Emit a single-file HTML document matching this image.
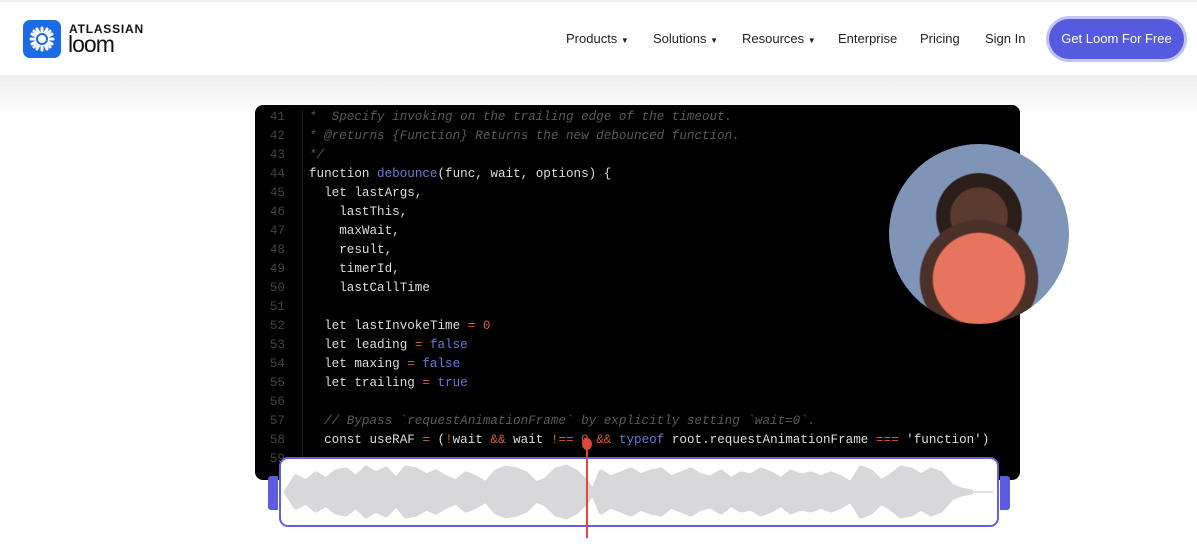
<!DOCTYPE html><html><head><style>
body{margin:0;width:1197px;height:547px;overflow:hidden;background:#fff;font-family:"Liberation Sans",sans-serif;position:relative}
.hdr{position:absolute;left:0;top:0;width:1197px;height:75px;background:#fff;border-top:2px solid #eee;box-sizing:border-box}
.band{position:absolute;left:0;top:75px;width:1197px;height:40px;background:linear-gradient(#eee,#fff)}
.nav{position:absolute;top:31px;font-size:13px;color:#222}
.btn{position:absolute;left:1049px;top:19px;width:135px;height:40px;border-radius:21px;background:#565ae0;box-shadow:0 0 0 3px #c3c4f4;color:#fff;font-size:13px;text-align:center;line-height:40px}
.code{position:absolute;left:255px;top:105px;width:765px;height:375px;background:#000;border-radius:8px;overflow:hidden;font-family:"Liberation Mono",monospace;font-size:12.6px}
.ln{position:absolute;left:0;width:30px;text-align:right;color:#444}
.l{position:absolute;left:54px;color:#ddd;white-space:pre}
.c{color:#5a5a5a;font-style:italic}.b{color:#6a78d8}.o{color:#d2603a}
.gut{position:absolute;left:47px;top:5px;width:1px;height:360px;background:#222}
</style></head><body>
<div class="hdr"></div><div class="band"></div>
<div style="position:absolute;left:23px;top:20px;width:38px;height:38px;border-radius:7px;background:#1d6ae5"></div>
<svg style="position:absolute;left:23px;top:20px" width="38" height="38" viewBox="0 0 38 38"><g stroke="#fff" stroke-width="3" stroke-linecap="round"><line x1="19" y1="8" x2="19" y2="30"/><line x1="8" y1="19" x2="30" y2="19"/><line x1="11" y1="11" x2="27" y2="27"/><line x1="27" y1="11" x2="11" y2="27"/><line x1="14" y1="9" x2="24" y2="29"/><line x1="24" y1="9" x2="14" y2="29"/><line x1="9" y1="14" x2="29" y2="24"/><line x1="29" y1="14" x2="9" y2="24"/></g><circle cx="19" cy="19" r="5" fill="#fff" stroke="#1d6ae5" stroke-width="2"/></svg>
<div style="position:absolute;left:69px;top:22px;font-size:12px;font-weight:bold;letter-spacing:.8px;color:#111">ATLASSIAN</div>
<div style="position:absolute;left:68px;top:31px;font-size:23px;color:#111;letter-spacing:-1px">loom</div>
<div class="nav" style="left:566px">Products <span style="font-size:8px">▼</span></div>
<div class="nav" style="left:653px">Solutions <span style="font-size:8px">▼</span></div>
<div class="nav" style="left:742px">Resources <span style="font-size:8px">▼</span></div>
<div class="nav" style="left:838px">Enterprise</div>
<div class="nav" style="left:920px">Pricing</div>
<div class="nav" style="left:985px">Sign In</div>
<div class="btn">Get Loom For Free</div>
<div class="code"><div class="gut"></div>
<div class="ln" style="top:5px">41</div><div class="l c" style="top:5px">*  Specify invoking on the trailing edge of the timeout.</div>
<div class="ln" style="top:24px">42</div><div class="l c" style="top:24px">* @returns {Function} Returns the new debounced function.</div>
<div class="ln" style="top:43px">43</div><div class="l c" style="top:43px">*/</div>
<div class="ln" style="top:62px">44</div><div class="l" style="top:62px;left:54px">function <span class="b">debounce</span>(func, wait, options) {</div>
<div class="ln" style="top:81px">45</div><div class="l" style="top:81px">  let lastArgs,</div>
<div class="ln" style="top:100px">46</div><div class="l" style="top:100px">    lastThis,</div>
<div class="ln" style="top:119px">47</div><div class="l" style="top:119px">    maxWait,</div>
<div class="ln" style="top:138px">48</div><div class="l" style="top:138px">    result,</div>
<div class="ln" style="top:157px">49</div><div class="l" style="top:157px">    timerId,</div>
<div class="ln" style="top:176px">50</div><div class="l" style="top:176px">    lastCallTime</div>
<div class="ln" style="top:195px">51</div>
<div class="ln" style="top:214px">52</div><div class="l" style="top:214px">  let lastInvokeTime <span class="o">= 0</span></div>
<div class="ln" style="top:233px">53</div><div class="l" style="top:233px">  let leading <span class="o">=</span> <span class="b">false</span></div>
<div class="ln" style="top:252px">54</div><div class="l" style="top:252px">  let maxing <span class="o">=</span> <span class="b">false</span></div>
<div class="ln" style="top:271px">55</div><div class="l" style="top:271px">  let trailing <span class="o">=</span> <span class="b">true</span></div>
<div class="ln" style="top:290px">56</div>
<div class="ln" style="top:309px">57</div><div class="l c" style="top:309px">  // Bypass `requestAnimationFrame` by explicitly setting `wait=0`.</div>
<div class="ln" style="top:328px">58</div><div class="l" style="top:328px">  const useRAF <span class="o">=</span> (<span class="o">!</span>wait <span class="o">&amp;&amp;</span> wait <span class="o">!== 0 &amp;&amp;</span> <span class="b">typeof</span> root.requestAnimationFrame <span class="o">===</span> 'function')</div>
<div class="ln" style="top:347px">59</div>
</div>
<div style="position:absolute;left:889px;top:144px;width:180px;height:180px;border-radius:50%;background:radial-gradient(circle at 50% 75%,#e8735f 0 28%,#4a3028 29% 36%,transparent 37%),radial-gradient(circle at 50% 40%,#5a3a2c 0 20%,#2b1d18 21% 30%,transparent 31%),#7e95b8"></div>
<div style="position:absolute;left:268px;top:476px;width:10px;height:34px;background:#5c5ce0;border-radius:3px 0 0 3px"></div>
<div style="position:absolute;left:1000px;top:476px;width:10px;height:34px;background:#5c5ce0;border-radius:0 3px 3px 0"></div>
<div style="position:absolute;left:279px;top:457px;width:716px;height:66px;border:2px solid #6560e0;border-radius:9px;background:#fff"></div>
<svg style="position:absolute;left:281px;top:459px" width="716" height="66" viewBox="0 0 716 66"><line x1="5" y1="33" x2="712" y2="33" stroke="#e4e4e6" stroke-width="2"/><path fill="#d8d8da" stroke="#d8d8da" stroke-width="5" stroke-linejoin="round" d="M5 33 L15 18 L25 23 L35 15 L45 21 L55 13 L65 11 L75 19 L85 9 L95 15 L105 10 L115 21 L125 9 L135 11 L145 17 L155 13 L165 19 L175 23 L185 15 L195 19 L205 25 L215 13 L225 9 L235 11 L245 15 L255 25 L265 21 L275 11 L285 8 L295 13 L305 23 L312 33 L320 13 L330 19 L340 15 L350 11 L360 17 L370 13 L380 11 L390 19 L400 15 L410 11 L420 17 L430 19 L440 13 L450 21 L460 15 L470 17 L480 11 L490 15 L500 21 L510 13 L520 17 L530 15 L540 19 L550 15 L560 19 L570 25 L580 9 L590 13 L600 23 L610 17 L620 9 L630 11 L640 17 L650 11 L660 15 L670 27 L680 31 L690 33 L680 35 L670 39 L660 51 L650 55 L640 49 L630 55 L620 57 L610 49 L600 43 L590 53 L580 57 L570 41 L560 47 L550 51 L540 47 L530 51 L520 49 L510 53 L500 45 L490 51 L480 55 L470 49 L460 51 L450 45 L440 53 L430 47 L420 49 L410 55 L400 51 L390 47 L380 55 L370 53 L360 49 L350 55 L340 51 L330 47 L320 53 L312 33 L305 43 L295 53 L285 58 L275 55 L265 45 L255 41 L245 51 L235 55 L225 57 L215 53 L205 41 L195 47 L185 51 L175 43 L165 47 L155 53 L145 49 L135 55 L125 57 L115 45 L105 56 L95 51 L85 57 L75 47 L65 55 L55 53 L45 45 L35 51 L25 43 L15 48 Z"/></svg>
<div style="position:absolute;left:586px;top:440px;width:2px;height:98px;background:#e0483c"></div>
<div style="position:absolute;left:582px;top:438px;width:10px;height:12px;border-radius:50%;background:#e0483c"></div>
</body></html>
